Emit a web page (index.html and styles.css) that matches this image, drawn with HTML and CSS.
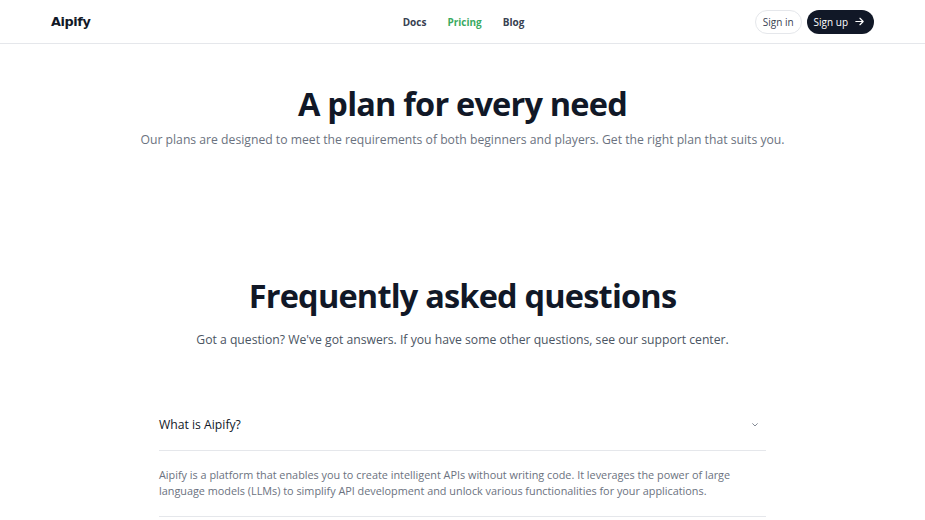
FILE: index.html
```html
<!DOCTYPE html>
<html lang="en">
<head>
<meta charset="utf-8">
<title>Aipify Pricing</title>
<link rel="stylesheet" href="styles.css">
</head>
<body>
<header class="topbar">
  <div class="topbar-inner">
    <a class="logo" href="#">Aipify</a>
    <nav class="nav">
      <a href="#">Docs</a>
      <a href="#" class="active">Pricing</a>
      <a href="#">Blog</a>
    </nav>
    <div class="actions">
      <a class="btn btn-ghost" href="#">Sign in</a>
      <a class="btn btn-dark" href="#">Sign up
        <svg width="11" height="11" viewBox="0 0 24 24" fill="none" stroke="currentColor" stroke-width="2.6" stroke-linecap="round" stroke-linejoin="round"><path d="M4 12h16M13 5l7 7-7 7"/></svg>
      </a>
    </div>
  </div>
</header>
<main>
  <section class="hero">
    <h1>A plan for every need</h1>
    <p>Our plans are designed to meet the requirements of both beginners and players. Get the right plan that suits you.</p>
  </section>
  <section class="faq">
    <h2>Frequently asked questions</h2>
    <p class="faq-sub">Got a question? We've got answers. If you have some other questions, see our support center.</p>
    <div class="faq-list">
      <div class="faq-item">
        <div class="faq-q">
          <span>What is Aipify?</span>
          <svg width="8" height="8" viewBox="0 0 24 24" fill="none" stroke="currentColor" stroke-width="2.5" stroke-linecap="round" stroke-linejoin="round"><path d="M5 8l7 7 7-7"/></svg>
        </div>
        <div class="faq-a">Aipify is a platform that enables you to create intelligent APIs without writing code. It leverages the power of large language models (LLMs) to simplify API development and unlock various functionalities for your applications.</div>
      </div>
    </div>
  </section>
</main>
</body>
</html>
```
FILE: styles.css
```css
* { box-sizing: border-box; }
body {
  margin: 0;
  font-family: "Open Sans", sans-serif;
  color: #111827;
  background: #fff;
}
a { text-decoration: none; color: inherit; }
.topbar {
  border-bottom: 1px solid #e5e7eb;
  height: 44px;
}
.topbar-inner {
  height: 43px;
  padding: 0 51px;
  display: grid;
  grid-template-columns: 1fr auto 1fr;
  align-items: center;
}
.logo {
  justify-self: start;
  font-family: "DejaVu Sans", sans-serif;
  font-weight: 700;
  font-size: 12.8px;
  color: #111827;
  letter-spacing: -0.4px;
}
.nav {
  display: flex;
  gap: 21px;
  font-size: 10px;
  font-weight: 700;
  color: #374151;
  padding-left: 2px;
}
.nav .active { color: #3aaa5f; }
.actions {
  justify-self: end;
  display: flex;
  gap: 5px;
  align-items: center;
}
.btn {
  display: inline-flex;
  align-items: center;
  height: 24px;
  border-radius: 12px;
  font-size: 10px;
  padding: 0 7px;
}
.btn-ghost {
  border: 1px solid #e5e7eb;
  color: #374151;
}
.btn-dark {
  background: #111827;
  color: #fff;
  padding: 0 9px 0 7px;
  gap: 6px;
}
.hero {
  text-align: center;
  padding-top: 40px;
}
.hero h1, .faq h2 {
  margin: 0;
  font-size: 32.5px;
  font-weight: 700;
  letter-spacing: -0.8px;
  line-height: 39px;
}
.hero p, .faq-sub {
  margin: 8px 0 0;
  font-size: 12.2px;
  line-height: 18px;
  color: #6b7280;
}
.faq {
  text-align: center;
  padding-top: 127px;
}
.faq-sub { margin-top: 16px; color: #4b5563; }
.faq-list {
  width: 607px;
  margin: 49px auto 0;
  text-align: left;
}
.faq-q {
  display: flex;
  justify-content: space-between;
  align-items: center;
  font-size: 12.2px;
  line-height: 18px;
  color: #111827;
  padding: 18px 0 16px;
  border-bottom: 1px solid #e5e7eb;
}
.faq-q svg { color: #6b7280; margin-right: 7px; }
.faq-a {
  font-size: 10.85px;
  line-height: 16px;
  color: #6b7280;
  padding: 16px 0 17px;
  border-bottom: 1px solid #e5e7eb;
}
```
